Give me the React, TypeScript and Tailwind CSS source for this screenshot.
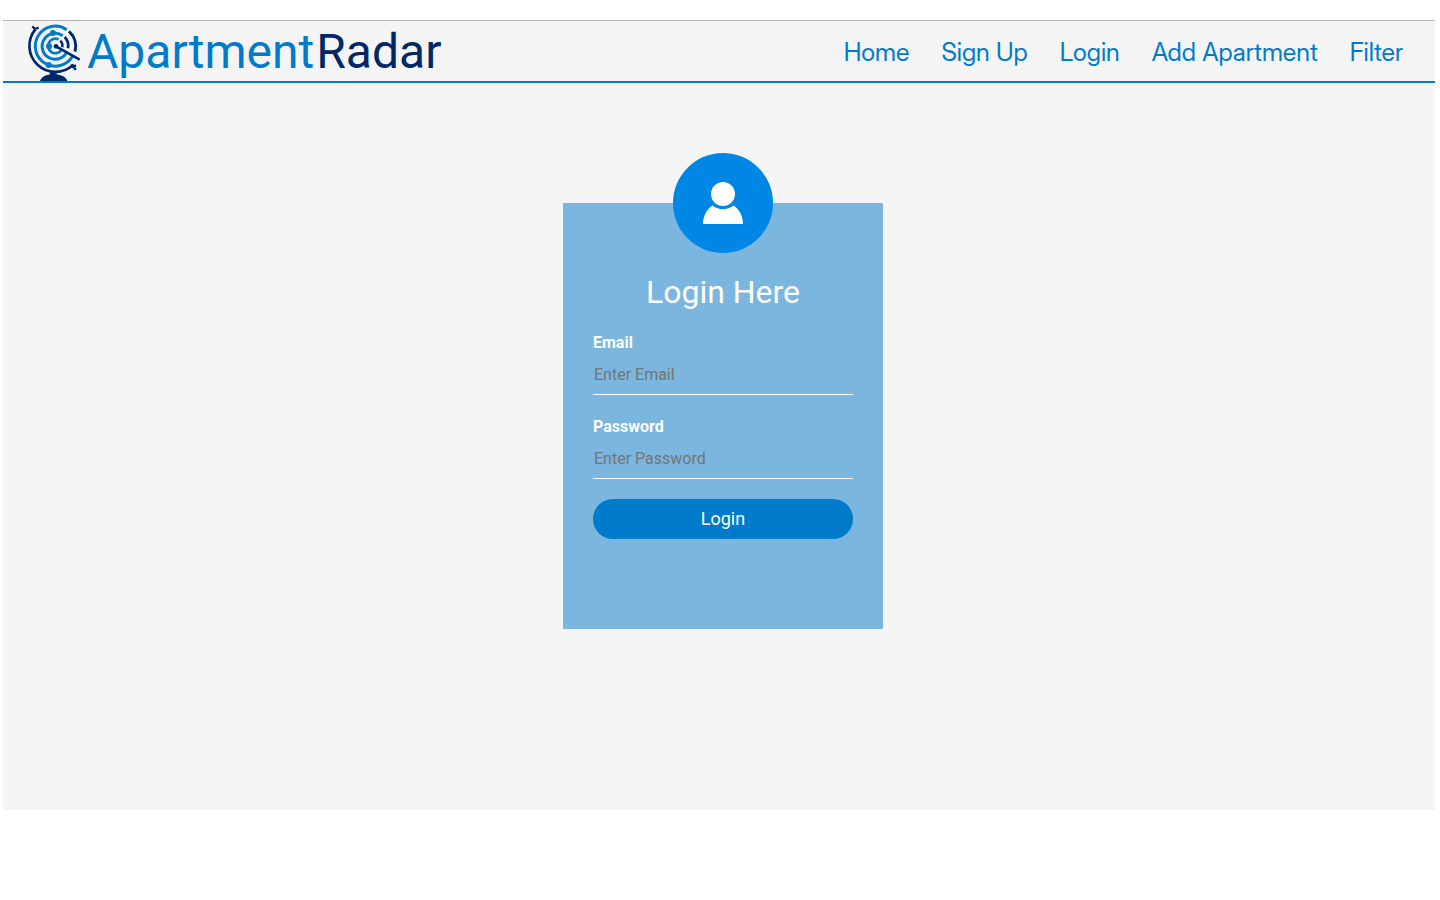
import React from "react";

const links = ["Home", "Sign Up", "Login", "Add Apartment", "Filter"];

function RadarGlobe() {
  return (
    <svg viewBox="81 33 162 180" className="h-[60px] w-[54px] shrink-0" fill="none" aria-hidden="true">
      <g stroke="#007bcb" strokeWidth="9">
        <path d="M200 59A60 60 0 1 0 218 138" />
        <path d="M188 77A39 39 0 1 0 200 127" />
        <path d="M176 88A22 22 0 1 0 184 121" strokeWidth="8" />
      </g>
      <g fill="#007bcb">
        <circle cx="159" cy="69" r="9" />
        <circle cx="147" cy="109" r="9" />
        <circle cx="146" cy="165" r="9" />
      </g>
      <g stroke="#002868" strokeWidth="9">
        <path d="M106 58A78 78 0 0 0 219 165" strokeWidth="8" />
        <path d="M207 64A61 61 0 0 1 225 125" />
        <path d="M194 81A39 39 0 0 1 204 115" strokeWidth="8" />
        <path d="M181 92A22 22 0 0 1 187 112" strokeWidth="7" />
        <path d="M97 49l8 8l11 -4M217 162l2 8l9 -4M220 168l7 12" strokeWidth="7" />
        <path d="M168 109L239 149" strokeWidth="8" />
      </g>
      <circle cx="168" cy="109" r="7" fill="#002868" />
      <path d="M150 184h20v9c17 3 29 9 32 20h-82c4-11 15-17 30-20z" fill="#002868" />
    </svg>
  );
}

function Field({ id, label, type }: { id: string; label: string; type: string }) {
  return (
    <div className="mb-5">
      <label htmlFor={id} className="block text-base leading-6 font-bold">
        {label}
      </label>
      <input
        id={id}
        type={type}
        placeholder={"Enter " + label}
        className="block h-10 w-full border-b border-white bg-transparent px-px text-base placeholder:text-[#757575] focus:outline-none"
      />
    </div>
  );
}

export default function App() {
  return (
    <div className="mt-5 mr-[5px] ml-[3px] bg-[#f5f5f5] font-['Roboto',sans-serif]">
      <header className="flex items-center justify-between border-t border-b-2 border-t-[#b2b2b2] border-b-[#007bcb] bg-[#f4f4f4] pr-8 pl-6">
        <a href="#" className="flex items-center gap-[6px] text-5xl text-[#007bcb]">
          <RadarGlobe />
          <span className="flex gap-0.5 pt-0.5">
            <span>Apartment</span>
            <span className="text-[#002868]">Radar</span>
          </span>
        </a>
        <nav className="flex gap-8 pt-1 font-['Inter_Display','Inter',sans-serif] text-[25px] text-[#007bcb]">
          {links.map((name) => (
            <a key={name} href="#">
              {name}
            </a>
          ))}
        </nav>
      </header>
      <main className="pt-[120px] pb-[181px] pl-2">
        <form
          className="mx-auto flow-root w-80 bg-[#7ab6de] px-[30px] pb-[70px] text-white"
          onSubmit={(e) => e.preventDefault()}
        >
          <svg viewBox="0 0 100 100" className="mx-auto -mt-[50px] size-[100px]" aria-hidden="true">
            <circle cx="50" cy="50" r="50" fill="#0086e4" />
            <circle cx="50" cy="41" r="12" fill="#fff" />
            <path d="M30 71C30 63 34 56 39.500 52.500Q50 60 60.500 52.500C66 56 70 63 70 71z" fill="#fff" />
          </svg>
          <h1 className="mb-5 pt-5 text-center text-[32px] leading-[38px]">Login Here</h1>
          <Field id="email" label="Email" type="email" />
          <Field id="password" label="Password" type="password" />
          <button type="submit" className="mb-5 block h-10 w-full rounded-full bg-[#007bcb] text-lg text-white">
            Login
          </button>
        </form>
      </main>
    </div>
  );
}
